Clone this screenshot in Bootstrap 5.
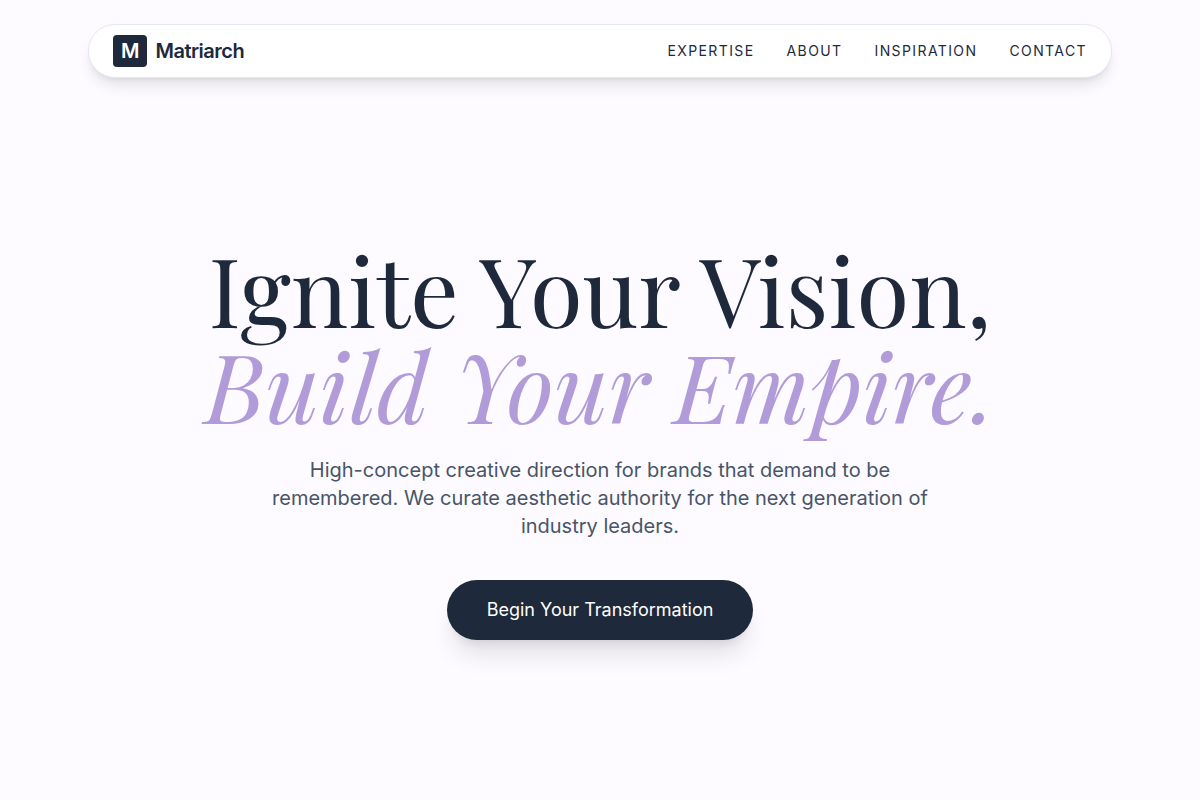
<!DOCTYPE html>
<html lang="en">
<head>
<meta charset="utf-8">
<meta name="viewport" content="width=device-width, initial-scale=1">
<title>Matriarch</title>
<link href="https://cdn.jsdelivr.net/npm/bootstrap@5.3.0/dist/css/bootstrap.min.css" rel="stylesheet">
<style>
  :root { --ink: #1e293b; --page: #fdfbff; --lilac: #b19cd9; --slate: #475569; }
  body { font-family: Inter, "Liberation Sans", sans-serif; background: var(--page); color: var(--ink); }
  .site-header { padding: 24px 16px 2px; }
  .site-nav { max-width: 1024px; padding: 10px 24px; background: #fff; border: 1px solid #e6e6fa; box-shadow: 0 10px 15px -3px rgba(0,0,0,.1), 0 4px 6px -4px rgba(0,0,0,.1); }
  .brand { font-size: 20px; line-height: 28px; font-weight: 600; letter-spacing: -0.5px; color: var(--ink); }
  .brand-mark { background: var(--ink); color: #fff; border-radius: 4px; padding: 2px 8px; letter-spacing: 0; }
  .site-links { gap: 32px; }
  .site-links a { font-size: 14px; line-height: 20px; letter-spacing: 1.4px; color: var(--ink); }
  .hero-title { font-family: "Playfair Display", "Liberation Serif", serif; font-size: 96px; line-height: 96px; font-weight: 400; }
  .hero-title em { color: var(--lilac); }
  .hero-text { max-width: 672px; margin-bottom: 40px; font-size: 20px; line-height: 28px; color: var(--slate); }
  .hero-btn { background: var(--ink); color: #fff; font-size: 18px; line-height: 28px; padding: 16px 40px; border: 0; box-shadow: 0 20px 25px -5px rgba(0,0,0,.1), 0 8px 10px -6px rgba(0,0,0,.1); }
  .hero-btn:hover { background: #334155; color: #fff; }
  @media (max-width: 800px) { .hero-title { font-size: 48px; line-height: 52px; } }
</style>
</head>
<body class="min-vh-100 d-flex flex-column">
<header class="site-header">
  <nav class="site-nav rounded-pill mx-auto d-flex align-items-center justify-content-between" aria-label="Main">
    <a href="#" class="brand d-flex align-items-center gap-2 text-decoration-none"><span class="brand-mark">M</span>Matriarch</a>
    <div class="site-links d-none d-md-flex">
      <a class="text-decoration-none" href="#expertise">EXPERTISE</a>
      <a class="text-decoration-none" href="#about">ABOUT</a>
      <a class="text-decoration-none" href="#inspiration">INSPIRATION</a>
      <a class="text-decoration-none" href="#contact">CONTACT</a>
    </div>
  </nav>
</header>
<main class="flex-grow-1 d-flex flex-column align-items-center justify-content-center text-center px-3">
  <h1 class="hero-title mb-4">Ignite Your Vision,<br><em>Build Your Empire.</em></h1>
  <p class="hero-text">High-concept creative direction for brands that demand to be remembered. We curate aesthetic authority for the next generation of industry leaders.</p>
  <button type="button" class="btn hero-btn rounded-pill">Begin Your Transformation</button>
</main>
<script src="https://cdn.jsdelivr.net/npm/bootstrap@5.3.0/dist/js/bootstrap.bundle.min.js"></script>
</body>
</html>
